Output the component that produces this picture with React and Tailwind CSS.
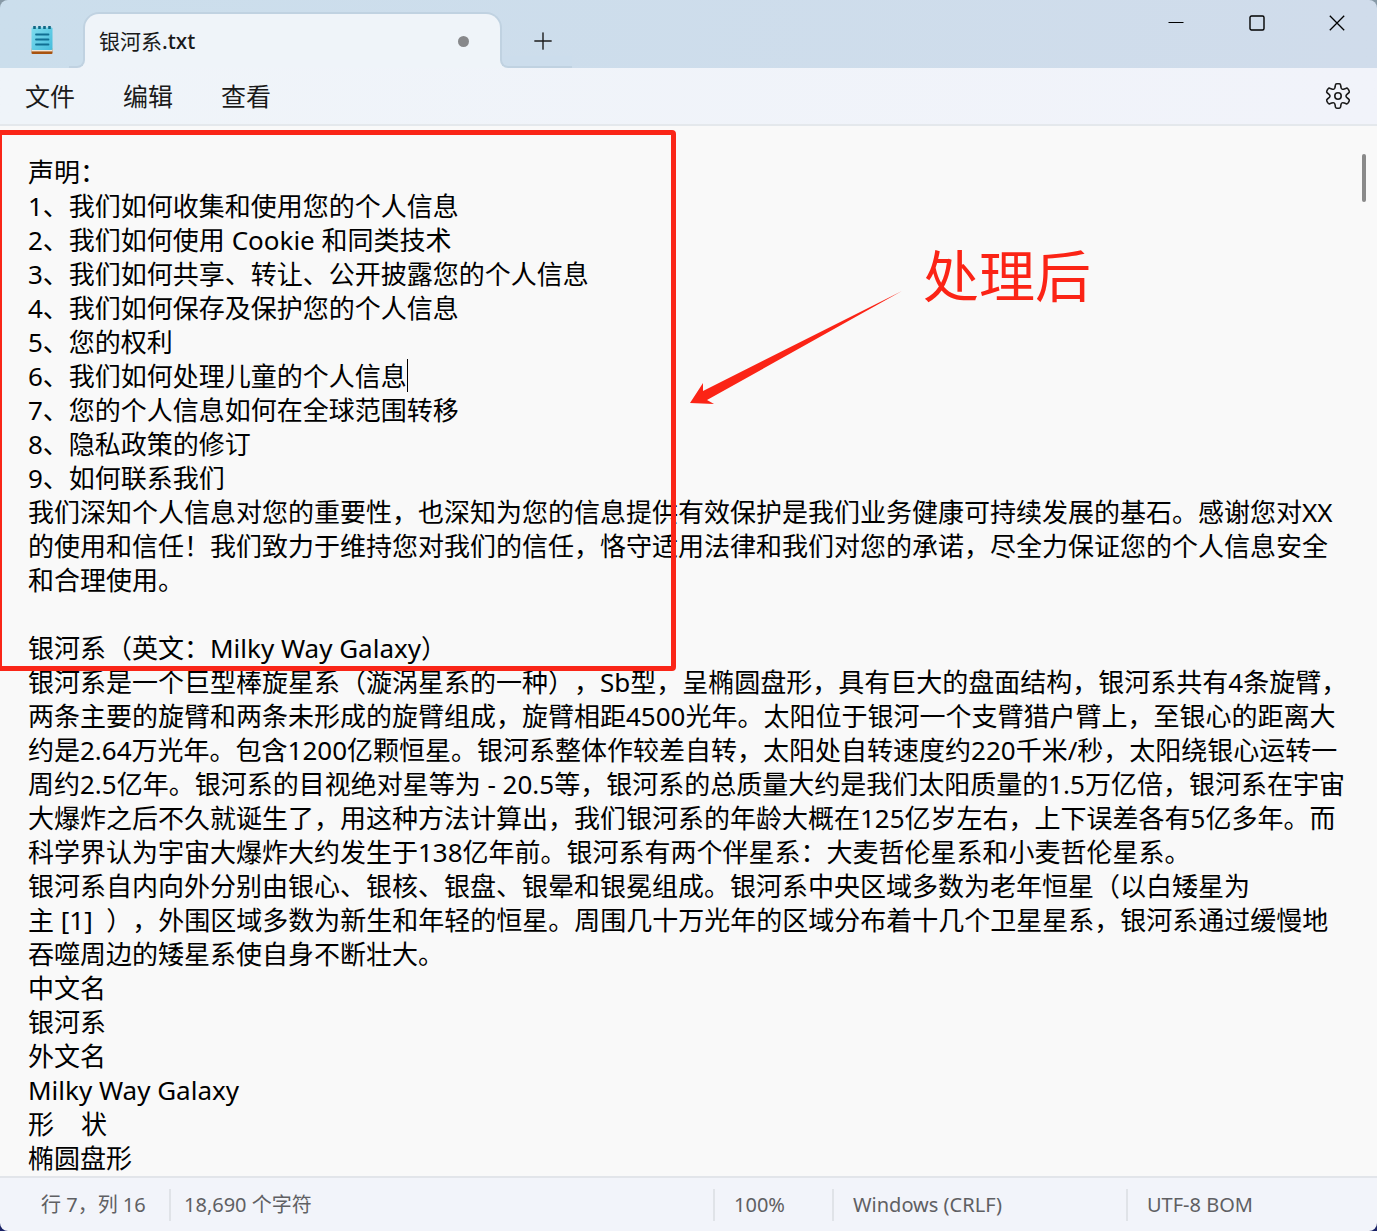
import React, { useState } from 'react'
import { Plus } from 'lucide-react'

const initialText = [
  '声明：',
  '1、我们如何收集和使用您的个人信息',
  '2、我们如何使用 Cookie 和同类技术',
  '3、我们如何共享、转让、公开披露您的个人信息',
  '4、我们如何保存及保护您的个人信息',
  '5、您的权利',
  '6、我们如何处理儿童的个人信息',
  '7、您的个人信息如何在全球范围转移',
  '8、隐私政策的修订',
  '9、如何联系我们',
  '我们深知个人信息对您的重要性，也深知为您的信息提供有效保护是我们业务健康可持续发展的基石。感谢您对XX',
  '的使用和信任！我们致力于维持您对我们的信任，恪守适用法律和我们对您的承诺，尽全力保证您的个人信息安全',
  '和合理使用。',
  '',
  '银河系（英文：Milky Way Galaxy）',
  '银河系是一个巨型棒旋星系（漩涡星系的一种），Sb型，呈椭圆盘形，具有巨大的盘面结构，银河系共有4条旋臂，',
  '两条主要的旋臂和两条未形成的旋臂组成，旋臂相距4500光年。太阳位于银河一个支臂猎户臂上，至银心的距离大',
  '约是2.64万光年。包含1200亿颗恒星。银河系整体作较差自转，太阳处自转速度约220千米/秒，太阳绕银心运转一',
  '周约2.5亿年。银河系的目视绝对星等为 - 20.5等，银河系的总质量大约是我们太阳质量的1.5万亿倍，银河系在宇宙',
  '大爆炸之后不久就诞生了，用这种方法计算出，我们银河系的年龄大概在125亿岁左右，上下误差各有5亿多年。而',
  '科学界认为宇宙大爆炸大约发生于138亿年前。银河系有两个伴星系：大麦哲伦星系和小麦哲伦星系。',
  '银河系自内向外分别由银心、银核、银盘、银晕和银冕组成。银河系中央区域多数为老年恒星（以白矮星为',
  '主 [1]  ），外围区域多数为新生和年轻的恒星。周围几十万光年的区域分布着十几个卫星星系，银河系通过缓慢地',
  '吞噬周边的矮星系使自身不断壮大。',
  '中文名',
  '银河系',
  '外文名',
  'Milky Way Galaxy',
  '形    状',
  '椭圆盘形',
].join('\n')

const menus = ['文件', '编辑', '查看']

const NotepadIcon = () => (
  <svg viewBox="0 0 22 30" className="h-[30px] w-[22px]" aria-hidden="true">
    <defs>
      <linearGradient id="page" x1="0" y1="0" x2="1" y2="1">
        <stop offset="0" stopColor="#7fdcee" />
        <stop offset="1" stopColor="#45bcdc" />
      </linearGradient>
    </defs>
    <rect x="0.5" y="23" width="21" height="6" rx="1" fill="#a8530f" />
    <rect x="0.5" y="23" width="21" height="3.4" fill="#f1e6d8" />
    <rect x="0.5" y="2.5" width="21" height="22.5" rx="1" fill="url(#page)" />
    <path d="M3.5 1v3M8.5 1v3M13.5 1v3M18.5 1v3" stroke="#0f6785" strokeWidth="2.6" />
    <path d="M5 9.5h12.5M5 14.5h12.5M5 19.5h12.5" stroke="#106f93" strokeWidth="1.8" strokeLinecap="round" />
  </svg>
)

const GearIcon = () => (
  <svg viewBox="-14 -14 28 28" className="size-7" fill="none" stroke="#1c1c1c" strokeWidth="1.6" aria-hidden="true">
    {[0, 60, 120, 180, 240, 300].map((angle) => (
      <path
        key={angle}
        transform={`rotate(${angle})`}
        d="M-4 -6.9C-3.2 -7.4 -3.1 -8 -2.9 -9L-2.6 -11C-2.5 -11.9 -2 -12.1 -1.2 -12.2C-.4 -12.3 .4 -12.3 1.2 -12.2C2 -12.1 2.5 -11.9 2.6 -11L2.9 -9C3.1 -8 3.2 -7.4 4 -6.9"
      />
    ))}
    <circle r="3.2" />
  </svg>
)

const TitleBar = () => (
  <header className="flex h-[68px] shrink-0 items-end bg-linear-to-r from-[#cbdeec] to-[#d0dceb]">
    <div className="flex h-14 w-[83px] items-center justify-center">
      <NotepadIcon />
    </div>
    <div className="relative flex h-14 w-[419px] items-center justify-between rounded-t-2xl border-2 border-b-0 border-[#c0d2e1] bg-[#eff4f9] pr-[31px] pl-3.5">
      <span className="absolute bottom-0 -left-4 h-3 w-4 bg-[#eff4f9]">
        <span className="block size-full rounded-br-lg border-r-2 border-b-2 border-[#c0d2e1] bg-[#cbdeec]" />
      </span>
      <span className="text-[21px] leading-7 text-[#1a1a1a]">
        银河系<span className="font-medium">.txt</span>
      </span>
      <span className="size-[11px] rounded-full bg-[#87888b]" />
      <span className="absolute bottom-0 left-[415px] h-3 w-[72px] bg-[#eff4f9]">
        <span className="block size-full rounded-bl-lg border-b-2 border-l-2 border-[#c0d2e1] bg-[#ccddec]" />
      </span>
    </div>
    <button className="mb-[9px] ml-[23px] flex size-9 items-center justify-center" aria-label="新建标签页">
      <Plus className="size-7 text-[#1c1c1c]" strokeWidth={1.2} />
    </button>
    <div className="ml-auto flex h-full">
      <button className="flex h-[45px] w-[81px] items-center justify-center" aria-label="最小化">
        <svg viewBox="0 0 16 16" className="size-4" stroke="#000" strokeWidth="1">
          <path d="M.5 7.5h15" />
        </svg>
      </button>
      <button className="flex h-[45px] w-[81px] items-center justify-center" aria-label="最大化">
        <svg viewBox="0 0 16 16" className="size-4" fill="none" stroke="#000" strokeWidth="1.4">
          <rect x="1" y="1" width="14" height="14" rx="1.5" />
        </svg>
      </button>
      <button className="flex h-[45px] w-20 items-center justify-center" aria-label="关闭">
        <svg viewBox="0 0 16 16" className="size-4" stroke="#000" strokeWidth="1.3">
          <path d="M.8 .8l14.4 14.4M15.2 .8L.8 15.2" />
        </svg>
      </button>
    </div>
  </header>
)

const MenuBar = () => (
  <nav className="flex h-[58px] shrink-0 items-center justify-between border-b-2 border-[#e4e8ec] bg-linear-to-r from-[#eff4f9] to-[#f1f3fa] px-[25px]">
    <div className="flex gap-12">
      {menus.map((menu) => (
        <button key={menu} className="text-[25px] leading-8 text-[#1a1a1a]">
          {menu}
        </button>
      ))}
    </div>
    <button aria-label="设置">
      <GearIcon />
    </button>
  </nav>
)

const Annotations = () => (
  <div className="pointer-events-none absolute inset-0 overflow-hidden">
    <div className="absolute top-[4px] -left-[3px] h-[541px] w-[679px] rounded border-5 border-[#fa2618]" />
    <svg viewBox="0 0 212 113" className="absolute top-[165px] left-[690px] h-[113px] w-[212px]" fill="#fb2416">
      <path d="M0 112L13 92V100L212 0L17 109L24 113Z" />
    </svg>
    <p className="absolute top-[115px] left-[923px] text-[56px] leading-[68px] text-[#fb2416]">处理后</p>
  </div>
)

const Editor = () => {
  const [text, setText] = useState(initialText)

  return (
    <main className="relative flex flex-1 bg-[#f9f9f9]">
      <textarea
        value={text}
        onChange={(e) => setText(e.target.value)}
        spellCheck={false}
        wrap="off"
        aria-label="文本编辑器"
        className="flex-1 resize-none overflow-hidden bg-transparent pt-[29px] pl-7 text-[26px] leading-[34px] whitespace-pre text-black outline-none [text-spacing-trim:space-all]"
      />
      <span className="absolute top-[233px] left-[407px] h-[33px] w-px bg-black" />
      <span className="absolute top-7 right-[11px] h-12 w-1 rounded-full bg-[#8a8a8a]" />
      <Annotations />
    </main>
  )
}

const StatusBar = () => (
  <footer className="flex h-[55px] shrink-0 items-center border-t-2 border-[#e2e5ea] bg-[#f2f4fa] text-[20px] leading-8 text-[#5f6063]">
    <span className="w-[169px] pl-[41px]">行 7，列 16</span>
    <span className="flex-1 border-l-2 border-[#e0e3e8] pl-[13px]">18,690 个字符</span>
    <span className="w-[119px] border-l-2 border-[#e0e3e8] pl-[19px]">100%</span>
    <span className="w-[294px] border-l-2 border-[#e0e3e8] pl-[19px]">Windows (CRLF)</span>
    <span className="w-[251px] border-l-2 border-[#e0e3e8] pl-[19px]">UTF-8 BOM</span>
  </footer>
)

const App = () => {
  return (
    <div className="h-screen bg-linear-to-b from-[#8799a6] from-50% to-[#1a2266] to-50% font-['Noto_Sans','Noto_Sans_CJK_SC',sans-serif]">
      <div lang="zh-CN" className="flex h-full flex-col overflow-hidden rounded-lg">
        <TitleBar />
        <MenuBar />
        <Editor />
        <StatusBar />
      </div>
    </div>
  )
}

export default App
